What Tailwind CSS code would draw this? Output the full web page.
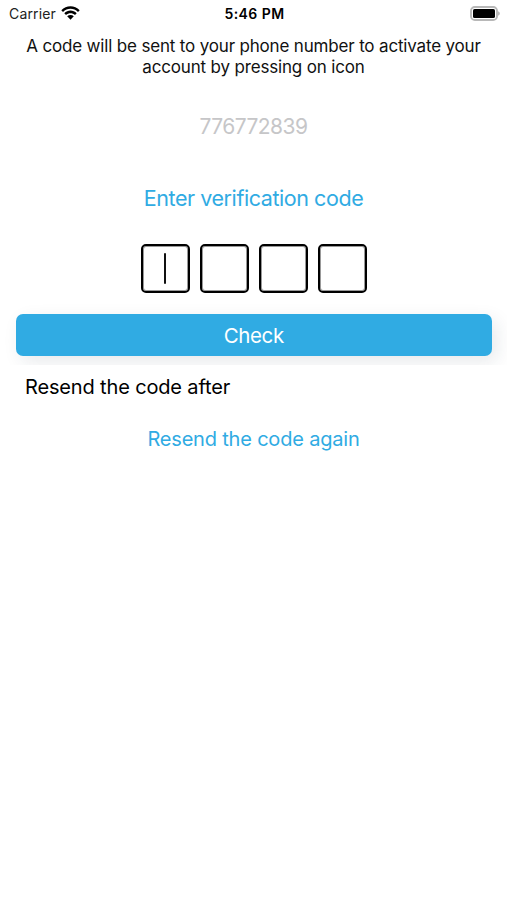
<!DOCTYPE html>
<html lang="en">
  <head>
    <meta charset="UTF-8" />
    <meta name="viewport" content="width=device-width, initial-scale=1.0" />
    <title>Verification</title>
    <script src="https://cdn.jsdelivr.net/npm/@tailwindcss/browser@4"></script>
  </head>
  <body class="bg-white h-[900px] overflow-hidden font-[Inter,sans-serif] text-black">
    <!-- status bar -->
    <header class="grid grid-cols-3 items-center h-7 pl-[9px] pr-[7px]">
      <div class="flex items-center gap-[5px]">
        <span class="text-[14px] leading-none tracking-[0.15px] text-[#222]">Carrier</span>
        <svg class="w-[19px] h-[14px] -mt-[3px]" viewBox="0 0 19 14">
          <path d="M.3 4.2C5.3-1 13.7-1 18.7 4.2L17 6C12.8 1.8 6.2 1.8 2 6z" />
          <path d="M3.3 7.3c3.4-3.6 9-3.6 12.4 0L14 9c-2.5-2.5-6.500-2.500-9 0z" />
          <path d="M6.2 10.3c1.9-1.8 4.7-1.800 6.600 0L9.500 13.700z" />
        </svg>
      </div>
      <div class="text-center text-[14px] leading-none font-semibold tracking-[0.45px]">5:46 PM</div>
      <svg class="justify-self-end w-[30px] h-[15px] -mt-[2px]" viewBox="0 0 30 15">
        <rect x="1" y="1" width="26" height="13" rx="3.8" fill="#fff" stroke="#b8b8b8" stroke-width="1.9" />
        <rect x="3" y="3" width="22" height="9" rx="1.6" />
        <path d="M28.2 5.3v4.4c2-.9 2-3.5 0-4.4z" fill="#aaa" />
      </svg>
    </header>

    <main class="flex flex-col items-center">
      <p class="mt-2 text-center text-[17px] leading-[20.5px] tracking-[-0.17px] text-[#111]">A code will be sent to your phone number to activate your<br />account by pressing on icon</p>
      <div class="mt-[36px] text-[21px] leading-7 tracking-[-0.55px] text-[#c6c6c8]">776772839</div>
      <div class="mt-[43px] text-[21.5px] leading-7 tracking-[-0.43px] text-[#30abe3]">Enter verification code</div>

      <div class="mt-8 flex gap-[10px]">
        <div class="size-[49px] rounded-[5px] border-2 border-black shadow-[inset_0_0_0_1px_rgba(0,0,0,0.4)] flex items-center justify-center"><span class="w-[2.5px] h-[31px] bg-[#111] rounded-[1px]"></span></div>
        <div class="size-[49px] rounded-[5px] border-2 border-black shadow-[inset_0_0_0_1px_rgba(0,0,0,0.4)]"></div>
        <div class="size-[49px] rounded-[5px] border-2 border-black shadow-[inset_0_0_0_1px_rgba(0,0,0,0.4)]"></div>
        <div class="size-[49px] rounded-[5px] border-2 border-black shadow-[inset_0_0_0_1px_rgba(0,0,0,0.4)]"></div>
      </div>

      <!-- the row clips the lower part of the button's shadow -->
      <div class="w-full pt-[21px] pb-[9px] pl-[15.5px] pr-[15px] overflow-hidden">
        <button class="block w-full h-[42px] pt-0.5 rounded-[7px] bg-[#30abe3] text-white text-[20.5px] tracking-[-0.4px] shadow-[5px_6px_18px_rgba(30,50,70,0.1)]">Check</button>
      </div>
      <div class="mt-2 self-start pl-[25px] text-[20px] leading-7 tracking-[-0.15px]">Resend the code after</div>
      <button class="mt-6 text-[20px] leading-7 tracking-[-0.19px] text-[#30abe3]">Resend the code again</button>
    </main>
  </body>
</html>
